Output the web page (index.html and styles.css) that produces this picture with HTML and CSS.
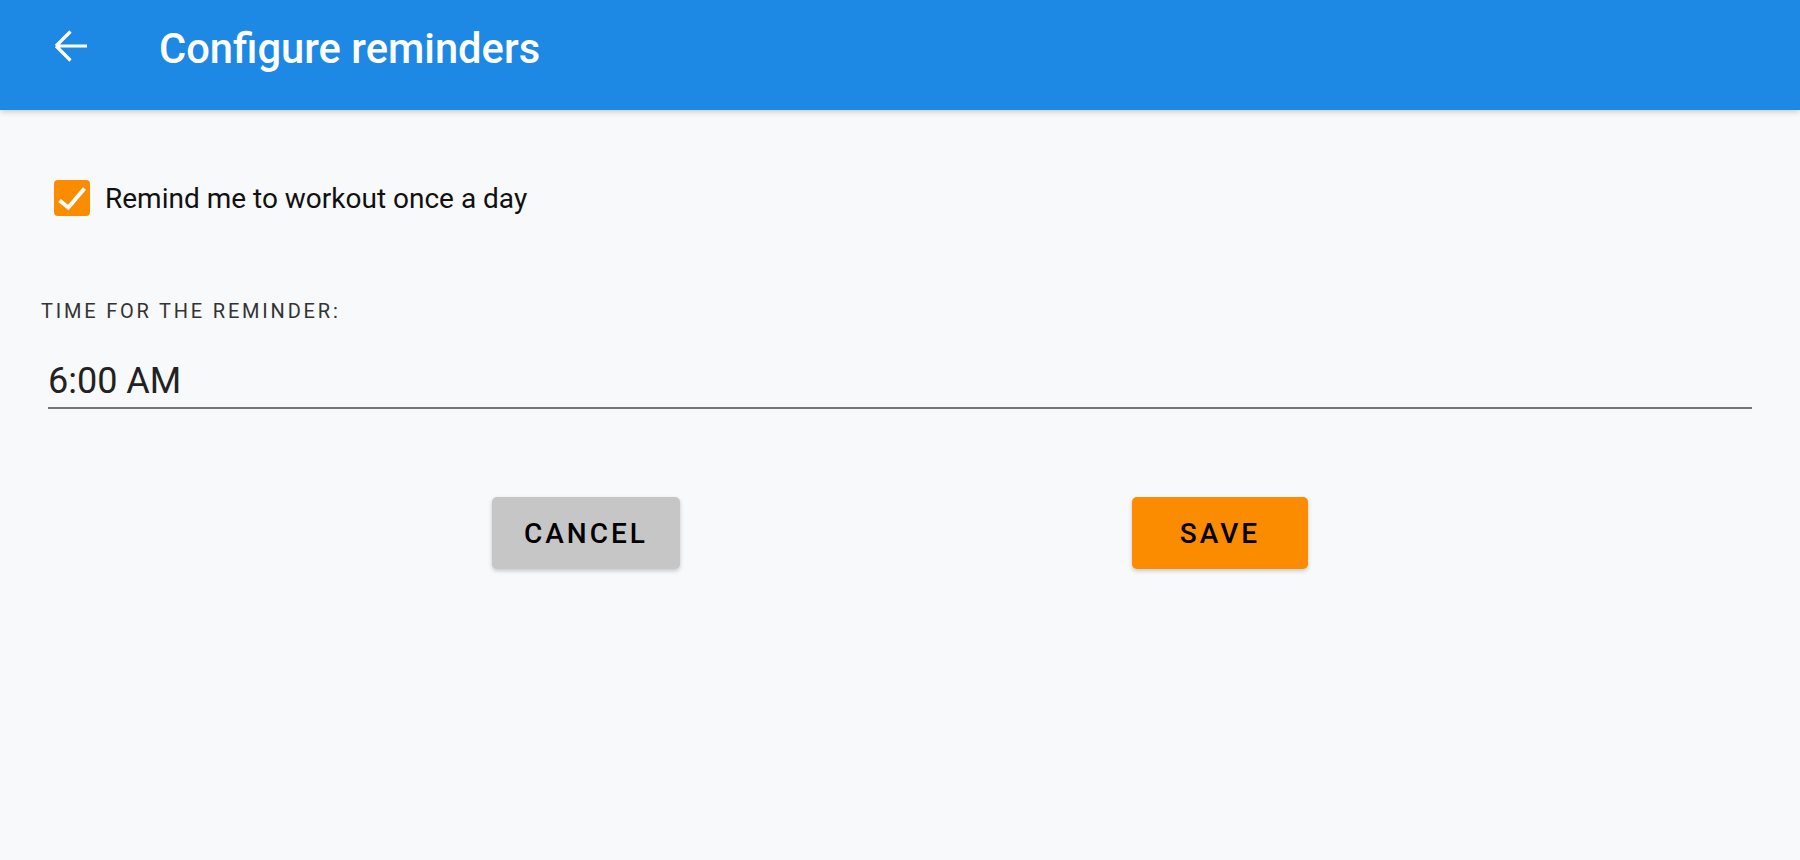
FILE: index.html
```html
<!DOCTYPE html>
<html lang="en">
<head>
<meta charset="utf-8">
<title>Configure reminders</title>
<link rel="stylesheet" href="styles.css">
</head>
<body>
<header class="appbar">
  <button class="back" aria-label="Back">
    <svg class="back-icon" width="36" height="36" viewBox="0 0 36 36" fill="none" stroke="#ffffff" stroke-width="3.2">
      <path d="M34 18 H3.5 M3 18 L17.5 3.5 M3 18 L17.5 32.5" stroke-linecap="butt"/>
    </svg>
  </button>
  <h1 class="title">Configure reminders</h1>
</header>
<main class="content">
  <label class="check-row">
    <span class="checkbox">
      <svg width="36" height="36" viewBox="0 0 36 36" fill="none" stroke="#ffffff" stroke-width="4">
        <path d="M5.5 20.5 L14.3 27.5 L30.5 8.5"/>
      </svg>
    </span>
    <span class="check-label">Remind me to workout once a day</span>
  </label>
  <div class="field-label">TIME FOR THE REMINDER:</div>
  <div class="field">6:00 AM</div>
  <div class="actions">
    <button class="btn btn-cancel">CANCEL</button>
    <button class="btn btn-save">SAVE</button>
  </div>
</main>
</body>
</html>
```
FILE: styles.css
```css
html, body {
  margin: 0;
  padding: 0;
}
body {
  width: 1800px;
  height: 860px;
  background: #f8f9fb;
  font-family: Roboto, "Noto Sans", "Liberation Sans", sans-serif;
  overflow: hidden;
}
.appbar {
  height: 110px;
  background: #1e88e5;
  display: flex;
  align-items: center;
  box-shadow: 0 2px 6px rgba(0, 0, 0, 0.18);
  position: relative;
  z-index: 1;
}
.back {
  margin-left: 53px;
  width: 36px;
  height: 36px;
  padding: 0;
  border: 0;
  background: transparent;
  display: flex;
  align-items: center;
  justify-content: center;
  margin-top: -18px;
}
.back-icon {
  display: block;
}
.title {
  margin: -14px 0 0 70px;
  color: #ffffff;
  font-size: 41.7px;
  font-weight: 500;
}
.content {
  padding: 70px 40px 0 40px;
}
.check-row {
  display: flex;
  align-items: center;
  padding-left: 14px;
  height: 36px;
}
.checkbox {
  width: 36px;
  height: 36px;
  border-radius: 4px;
  background: #fb8c00;
  display: block;
}
.checkbox svg {
  display: block;
}
.check-label {
  margin-left: 15px;
  font-size: 28px;
  color: #111111;
}
.field-label {
  margin-top: 83px;
  padding-left: 1px;
  font-size: 20px;
  letter-spacing: 2.8px;
  color: #333333;
}
.field {
  margin: 37px 8px 0 8px;
  font-size: 36px;
  color: #222222;
  padding-bottom: 5px;
  border-bottom: 2px solid #757575;
}
.actions {
  margin-top: 88px;
  display: flex;
  justify-content: space-evenly;
}
.btn {
  height: 72px;
  min-width: 176px;
  padding: 0 32px;
  border: 0;
  border-radius: 5px;
  font-family: Roboto, "Noto Sans", "Liberation Sans", sans-serif;
  font-size: 28px;
  font-weight: 500;
  letter-spacing: 3px;
  color: #000000;
  box-shadow: 0 2px 4px rgba(0, 0, 0, 0.2);
}
.btn-cancel {
  background: #c6c6c7;
}
.btn-save {
  background: #fb8c00;
}
```
